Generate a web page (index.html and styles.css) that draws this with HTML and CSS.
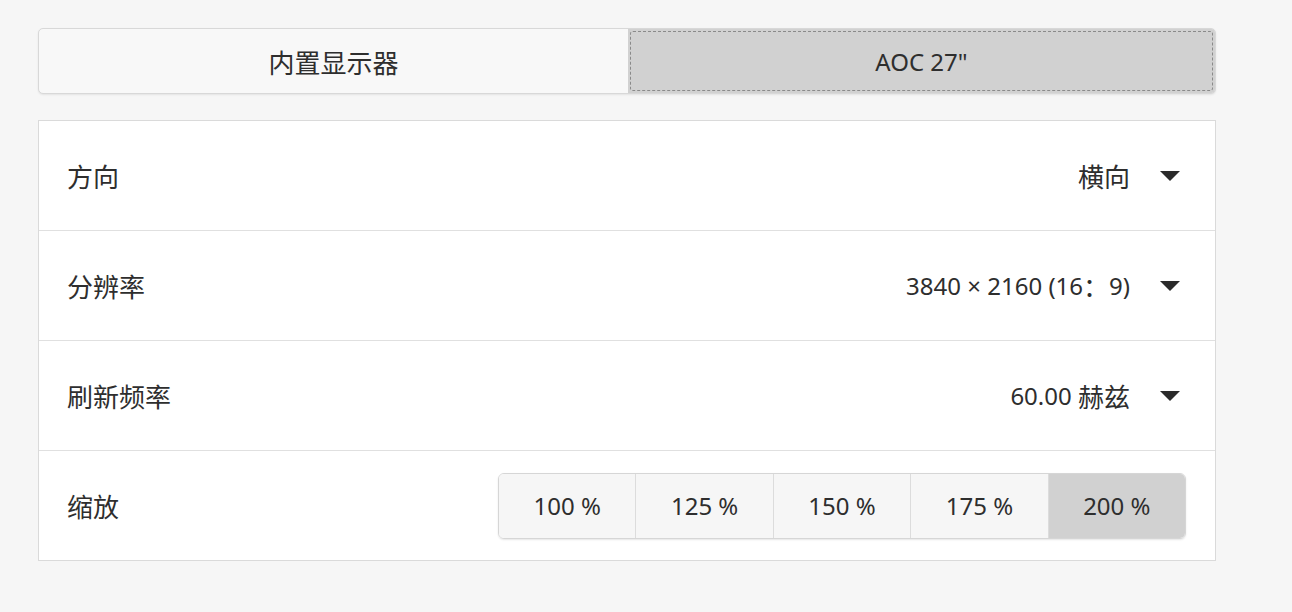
FILE: index.html
```html
<!DOCTYPE html>
<html lang="zh-CN">
<head>
<meta charset="utf-8">
<link rel="stylesheet" href="styles.css">
</head>
<body>
<div class="page">
  <div class="tabs">
    <div class="tab cjk">内置显示器</div>
    <div class="tab active"><span class="focus">AOC 27"</span></div>
  </div>
  <div class="panel">
    <div class="row">
      <div class="label cjk">方向</div>
      <div class="value"><span class="cjk">横向</span><span class="arrow"></span></div>
    </div>
    <div class="row">
      <div class="label cjk">分辨率</div>
      <div class="value">3840 × 2160 (16<span class="cjk">：</span>9)<span class="arrow"></span></div>
    </div>
    <div class="row">
      <div class="label cjk">刷新频率</div>
      <div class="value">60.00&nbsp;<span class="cjk">赫兹</span><span class="arrow"></span></div>
    </div>
    <div class="row">
      <div class="label cjk">缩放</div>
      <div class="seg">
        <div class="btn">100 %</div>
        <div class="btn">125 %</div>
        <div class="btn">150 %</div>
        <div class="btn">175 %</div>
        <div class="btn on">200 %</div>
      </div>
    </div>
  </div>
</div>
</body>
</html>
```

FILE: styles.css
```css
html, body {
  margin: 0;
  padding: 0;
  background: #f6f6f6;
}
body {
  font-family: "Noto Sans", "Noto Sans CJK SC", sans-serif;
  color: #2e2e2e;
  font-size: 24px;
}
.cjk {
  font-family: "Noto Sans CJK SC", sans-serif;
  font-size: 26px;
}
.page {
  padding: 28px 0 0 38px;
  width: 1178px;
}
.tabs {
  display: flex;
  height: 66px;
  border: 1px solid #d8d8d8;
  border-radius: 5px;
  box-sizing: border-box;
  background: #f8f8f8;
  box-shadow: 0 1px 2px rgba(0,0,0,0.08);
  overflow: hidden;
}
.tab {
  flex: 0 0 589px;
  display: flex;
  align-items: center;
  justify-content: center;
  box-sizing: border-box;
}
.tab.active {
  flex: 1 1 auto;
  background: #d1d1d1;
  padding: 2px;
}
.focus {
  flex: 1;
  align-self: stretch;
  display: flex;
  align-items: center;
  justify-content: center;
  border: 1px dashed #8a8a8a;
  border-radius: 3px;
}
.panel {
  margin-top: 26px;
  background: #fff;
  border: 1px solid #dadada;
  box-sizing: border-box;
}
.row {
  height: 110px;
  display: flex;
  align-items: center;
  justify-content: space-between;
  padding: 0 29px 0 28px;
  border-top: 1px solid #e0e0e0;
  box-sizing: border-box;
}
.row:first-child {
  border-top: none;
  height: 109px;
}
.value {
  display: flex;
  align-items: center;
}
.arrow {
  width: 0;
  height: 0;
  border-left: 10px solid transparent;
  border-right: 10px solid transparent;
  border-top: 10px solid #2b2b2b;
  margin-left: 30px;
  margin-right: 6px;
}
.seg {
  display: flex;
  width: 688px;
  height: 66px;
  border: 1px solid #d6d6d6;
  border-radius: 6px;
  overflow: hidden;
  box-shadow: 0 1px 2px rgba(0,0,0,0.1);
  box-sizing: border-box;
}
.btn {
  flex: 1 1 0;
  display: flex;
  align-items: center;
  justify-content: center;
  background: #f6f6f6;
  border-left: 1px solid #dcdcdc;
}
.btn:first-child {
  border-left: none;
}
.btn.on {
  background: #d1d1d1;
}
```
